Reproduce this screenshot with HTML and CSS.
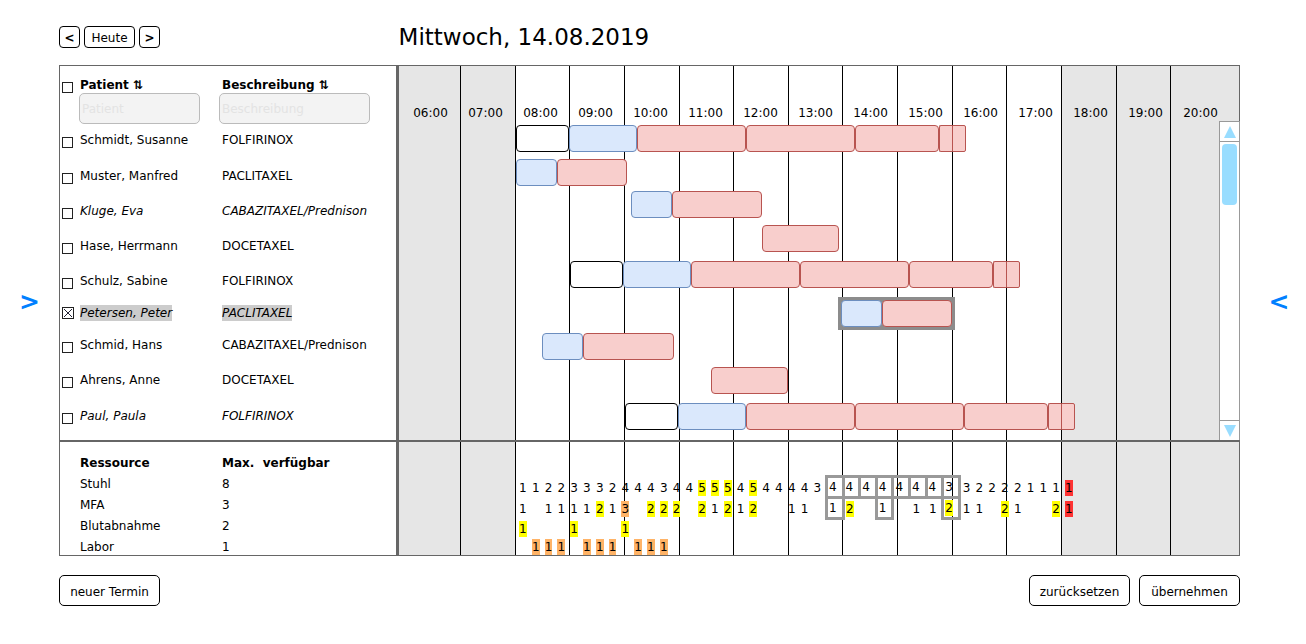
FILE: index.html
```html
<!DOCTYPE html>
<html lang="de">
<head>
<meta charset="utf-8">
<title>Terminplanung</title>
<meta name="viewport" content="width=device-width, initial-scale=1">
<link rel="stylesheet" href="styles.css">
</head>
<body>
<div class="page">
  <button class="handle" type="button" aria-label="Linke Leiste öffnen">&gt;</button>
  <main class="main">
    <header class="topbar">
      <nav class="day-nav">
        <button class="nav-btn nav-arrow" type="button" aria-label="Vorheriger Tag">&lt;</button>
        <button class="nav-btn" type="button">Heute</button>
        <button class="nav-btn nav-arrow" type="button" aria-label="Nächster Tag">&gt;</button>
      </nav>
      <h1 class="title">Mittwoch, 14.08.2019</h1>
    </header>

    <section class="calendar">
      <table class="patients">
        <thead>
          <tr>
            <th class="col-check"><input class="check" type="checkbox" aria-label="Alle auswählen"></th>
            <th class="col-name"><button class="sort" type="button">Patient ⇅</button><input class="filter" type="text" placeholder="Patient" aria-label="Patient filtern"></th>
            <th class="col-desc"><button class="sort" type="button">Beschreibung ⇅</button><input class="filter" type="text" placeholder="Beschreibung" aria-label="Beschreibung filtern"></th>
          </tr>
        </thead>
        <tbody>
          <tr class="row-tall"><td><input class="check" type="checkbox" id="p1"></td><td><label for="p1">Schmidt, Susanne</label></td><td>FOLFIRINOX</td></tr>
          <tr><td><input class="check" type="checkbox" id="p2"></td><td><label for="p2">Muster, Manfred</label></td><td>PACLITAXEL</td></tr>
          <tr class="tentative"><td><input class="check" type="checkbox" id="p3"></td><td><label for="p3">Kluge, Eva</label></td><td>CABAZITAXEL/Prednison</td></tr>
          <tr><td><input class="check" type="checkbox" id="p4"></td><td><label for="p4">Hase, Herrmann</label></td><td>DOCETAXEL</td></tr>
          <tr class="row-short"><td><input class="check" type="checkbox" id="p5"></td><td><label for="p5">Schulz, Sabine</label></td><td>FOLFIRINOX</td></tr>
          <tr class="row-short tentative selected"><td><input class="check" type="checkbox" id="p6" checked></td><td><label for="p6">Petersen, Peter</label></td><td><mark>PACLITAXEL</mark></td></tr>
          <tr><td><input class="check" type="checkbox" id="p7"></td><td><label for="p7">Schmid, Hans</label></td><td>CABAZITAXEL/Prednison</td></tr>
          <tr class="row-tall"><td><input class="check" type="checkbox" id="p8"></td><td><label for="p8">Ahrens, Anne</label></td><td>DOCETAXEL</td></tr>
          <tr class="row-last tentative"><td><input class="check" type="checkbox" id="p9"></td><td><label for="p9">Paul, Paula</label></td><td>FOLFIRINOX</td></tr>
        </tbody>
      </table>

      <div class="hours">
        <i class="off"></i><i class="off"></i><i></i><i></i><i></i><i></i><i></i><i></i><i></i><i></i><i></i><i></i><i class="off"></i><i class="off"></i><i class="off"></i>
      </div>
      <div class="split-v"></div>
      <div class="split-h"></div>

      <div class="schedule">
        <div class="hour-labels">
          <span>06:00</span><span>07:00</span><span>08:00</span><span>09:00</span><span>10:00</span><span>11:00</span><span>12:00</span><span>13:00</span><span>14:00</span><span>15:00</span><span>16:00</span><span>17:00</span><span>18:00</span><span>19:00</span><span>20:00</span>
        </div>
        <div class="track"><i style="--w:117"></i><b class="seg" style="--w:53"></b><b class="seg prep" style="--w:68"></b><b class="seg drug" style="--w:109"></b><b class="seg drug" style="--w:109"></b><b class="seg drug" style="--w:84"></b><b class="seg drug small" style="--w:13"></b><b class="seg drug small last" style="--w:14"></b></div>
        <div class="track track-short"><i style="--w:117"></i><b class="seg prep" style="--w:41"></b><b class="seg drug" style="--w:70"></b></div>
        <div class="track"><i style="--w:232"></i><b class="seg prep" style="--w:41"></b><b class="seg drug" style="--w:90"></b></div>
        <div class="track track-tall"><i style="--w:363"></i><b class="seg drug" style="--w:77"></b></div>
        <div class="track track-tall"><i style="--w:171"></i><b class="seg" style="--w:53"></b><b class="seg prep" style="--w:68"></b><b class="seg drug" style="--w:109"></b><b class="seg drug" style="--w:109"></b><b class="seg drug" style="--w:84"></b><b class="seg drug small" style="--w:13"></b><b class="seg drug small last" style="--w:14"></b></div>
        <div class="track track-tall"><i style="--w:439"></i><div class="picked" style="--w:117"><b class="seg prep" style="--w:41"></b><b class="seg drug" style="--w:70"></b></div></div>
        <div class="track"><i style="--w:143"></i><b class="seg prep" style="--w:41"></b><b class="seg drug" style="--w:91"></b></div>
        <div class="track track-tall"><i style="--w:312"></i><b class="seg drug" style="--w:77"></b></div>
        <div class="track"><i style="--w:226"></i><b class="seg" style="--w:53"></b><b class="seg prep" style="--w:68"></b><b class="seg drug" style="--w:109"></b><b class="seg drug" style="--w:109"></b><b class="seg drug" style="--w:84"></b><b class="seg drug small" style="--w:13"></b><b class="seg drug small last" style="--w:14"></b></div>
      </div>

      <div class="scrollbar">
        <button class="scroll-btn" type="button" aria-label="Nach oben"><svg viewBox="0 0 12 12" width="12" height="12"><path d="M6 0L12 12H0Z"/></svg></button>
        <div class="scroll-track"><div class="scroll-thumb"></div></div>
        <button class="scroll-btn" type="button" aria-label="Nach unten"><svg viewBox="0 0 12 12" width="12" height="12"><path d="M0 0H12L6 12Z"/></svg></button>
      </div>

      <table class="resources">
        <thead><tr><th class="col-res">Ressource</th><th>Max.&nbsp; verfügbar</th></tr></thead>
        <tbody>
          <tr><td>Stuhl</td><td>8</td></tr>
          <tr><td>MFA</td><td>3</td></tr>
          <tr><td>Blutabnahme</td><td>2</td></tr>
          <tr><td>Labor</td><td>1</td></tr>
        </tbody>
      </table>

      <div class="load">
        <div class="load-row row-chairs">
          <span style="--c:2">1</span><span style="--c:3">1</span><span style="--c:4">2</span><span style="--c:5">2</span><span style="--c:6">3</span><span style="--c:7">3</span><span style="--c:8">3</span><span style="--c:9">2</span><span style="--c:10">4</span><span style="--c:11">4</span><span style="--c:12">4</span><span style="--c:13">3</span><span style="--c:14">4</span><span style="--c:15">4</span><span style="--c:16"><mark class="mid">5</mark></span><span style="--c:17"><mark class="mid">5</mark></span><span style="--c:18"><mark class="mid">5</mark></span><span style="--c:19">4</span><span style="--c:20"><mark class="mid">5</mark></span><span style="--c:21">4</span><span style="--c:22">4</span><span style="--c:23">4</span><span style="--c:24">4</span><span style="--c:25">3</span>
          <span class="framed" style="--c:27">4</span><span class="framed" style="--c:28">4</span><span class="framed" style="--c:29">4</span><span class="framed" style="--c:30">4</span><span class="framed" style="--c:31">4</span><span class="framed" style="--c:32">4</span><span class="framed" style="--c:33">4</span><span class="framed" style="--c:34">3</span>
          <span style="--c:36">3</span><span style="--c:37">2</span><span style="--c:38">2</span><span style="--c:39">2</span><span style="--c:40">2</span><span style="--c:41">1</span><span style="--c:42">1</span><span style="--c:43">1</span><span style="--c:44"><mark class="over">1</mark></span>
        </div>
        <div class="load-row row-staff">
          <span style="--c:2">1</span><span style="--c:4">1</span><span style="--c:5">1</span><span style="--c:6">1</span><span style="--c:7">1</span><span style="--c:8"><mark class="mid">2</mark></span><span style="--c:9">1</span><span style="--c:10"><mark class="full">3</mark></span><span style="--c:12"><mark class="mid">2</mark></span><span style="--c:13"><mark class="mid">2</mark></span><span style="--c:14"><mark class="mid">2</mark></span><span style="--c:16"><mark class="mid">2</mark></span><span style="--c:17">1</span><span style="--c:18"><mark class="mid">2</mark></span><span style="--c:19">1</span><span style="--c:20"><mark class="mid">2</mark></span><span style="--c:23">1</span><span style="--c:24">1</span>
          <span class="framed" style="--c:27">1</span><span class="wide" style="--c:28"><mark class="mid">2</mark></span><span class="framed" style="--c:30">1</span><span class="wide" style="--c:32">1</span><span class="wide" style="--c:33">1</span><span class="framed" style="--c:34"><mark class="mid">2</mark></span>
          <span style="--c:36">1</span><span style="--c:37">1</span><span style="--c:39"><mark class="mid">2</mark></span><span style="--c:40">1</span><span style="--c:43"><mark class="mid">2</mark></span><span style="--c:44"><mark class="over">1</mark></span>
        </div>
        <div class="load-row row-blood">
          <span style="--c:2"><mark class="mid">1</mark></span><span style="--c:6"><mark class="mid">1</mark></span><span style="--c:10"><mark class="mid">1</mark></span>
        </div>
        <div class="load-row row-lab">
          <span style="--c:3"><mark class="full">1</mark></span><span style="--c:4"><mark class="full">1</mark></span><span style="--c:5"><mark class="full">1</mark></span><span style="--c:7"><mark class="full">1</mark></span><span style="--c:8"><mark class="full">1</mark></span><span style="--c:9"><mark class="full">1</mark></span><span style="--c:11"><mark class="full">1</mark></span><span style="--c:12"><mark class="full">1</mark></span><span style="--c:13"><mark class="full">1</mark></span>
        </div>
      </div>
    </section>

    <footer class="actions">
      <button class="action" type="button">neuer Termin</button>
      <div class="actions-end">
        <button class="action" type="button">zurücksetzen</button>
        <button class="action" type="button">übernehmen</button>
      </div>
    </footer>
  </main>
  <button class="handle" type="button" aria-label="Rechte Leiste öffnen">&lt;</button>
</div>
</body>
</html>
```

FILE: styles.css
```css
* { box-sizing: border-box; }

body {
  margin: 0;
  background: #fff;
  color: #000;
  font: 12px/16px "DejaVu Sans", Verdana, sans-serif;
}

button, input { font: inherit; color: inherit; }
button { padding: 0; background: none; border: 0; cursor: pointer; }
mark { background: #ccc; color: inherit; }

.page {
  display: grid;
  grid-template-columns: 59px minmax(0, 1fr) 66px;
  min-height: 100vh;
}

.handle {
  padding: 0 0 40px;
  color: #0080ff;
  font-size: 25px;
  font-weight: bold;
}
.handle:last-child { padding-left: 12px; }

.main { padding: 25px 0; }

/* Top bar */
.topbar {
  display: grid;
  grid-template-columns: 2fr 5fr;
  gap: 3px;
  align-items: center;
  height: 24px;
  margin-bottom: 16px;
}
.day-nav { display: flex; gap: 4px; }
.nav-btn {
  min-width: 51px;
  height: 22px;
  padding: 2px 6px 0;
  border: 1px solid #000;
  border-radius: 4px;
}
.nav-arrow { min-width: 21px; padding: 2px 0 0; font-weight: bold; }
.title { margin: 0; font-size: 23px; line-height: 24px; font-weight: normal; }

/* Calendar frame */
.calendar {
  display: grid;
  grid-template-columns: minmax(0, 2fr) 3px minmax(0, 5fr);
  grid-template-rows: auto 2px auto;
  border: 1px solid #666;
}
.split-v { grid-area: 1 / 2 / 4 / 3; background: #666; }
.split-h { grid-area: 2 / 1 / 3 / 4; background: #666; z-index: 1; }

/* Patient list */
.patients {
  grid-area: 1 / 1;
  align-self: start;
  width: 100%;
  table-layout: fixed;
  border-collapse: collapse;
}
.patients th, .patients td { padding: 0; text-align: left; vertical-align: top; }
.col-check { width: 19px; }
.col-name { width: 140px; }
.patients thead tr { height: 66px; }
.patients thead th { padding-top: 11px; }
.patients tbody tr { height: 35px; }
.patients tbody .row-tall { height: 36px; }
.patients tbody .row-short { height: 32px; }
.patients tbody .row-last { height: 20px; }
.patients td:nth-child(2) { padding-left: 1px; }
.patients td:nth-child(3) { padding-left: 3px; }
.tentative { font-style: italic; }
.selected label, .selected mark { display: inline-block; background: #ccc; }

.check {
  appearance: none;
  display: block;
  width: 11px;
  height: 11px;
  margin: 5px 0 0 2px;
  border: 1px solid #222;
  background: #fff;
}
.check:checked {
  width: 12px;
  height: 12px;
  margin-top: 2px;
  padding: 1px;
  background:
    linear-gradient(45deg, transparent 44%, #223 44% 56%, transparent 56%) content-box,
    linear-gradient(-45deg, transparent 44%, #223 44% 56%, transparent 56%) content-box;
}

.sort { display: block; margin-left: 1px; font-weight: bold; white-space: nowrap; }
.col-desc .sort { margin-left: 3px; }
.filter {
  display: block;
  width: 121px;
  height: 31px;
  padding: 3px 2px 2px;
  background: #f3f3f3;
  border: 1px solid #bbb;
  border-radius: 5px;
  font-weight: normal;
}
.col-desc .filter { width: 151px; }
.filter::placeholder { color: #e3e3e3; opacity: 1; }

/* Hour columns behind schedule and load */
.hours {
  grid-area: 1 / 3 / 4 / 4;
  display: grid;
  grid-template-columns: 62fr 55fr 54fr 55fr 55fr 54fr 55fr 54fr 55fr 55fr 54fr 55fr 55fr 54fr 68fr;
}
.hours i { border-right: 1px solid #000; }
.hours i:last-child { border-right: 0; }
.hours .off { background: #e6e6e6; }

/* Schedule */
.schedule {
  grid-area: 1 / 3;
  padding: 39px 0 10px;
}
.hour-labels {
  display: grid;
  grid-template-columns: repeat(15, 55fr);
  padding: 0 11px 0 4px;
  margin-bottom: 4px;
  text-align: center;
}
.track { display: flex; align-items: flex-start; height: 34px; }
.track-short { height: 32px; }
.track-tall { height: 36px; }
.track:last-child { height: 27px; }
.track > * { flex: none; width: calc(var(--w) / 840 * 100%); }
.seg {
  height: 27px;
  background: #fff;
  border: 1px solid #000;
  border-radius: 4px;
}
.prep { background: #dae8fc; border-color: #6c8ebf; }
.drug { background: #f8cecc; border-color: #b85450; }
.small { border-right: 0; border-radius: 2px 0 0 2px; }
.small.last { border-right: 1px solid #b85450; border-radius: 0 2px 2px 0; }
.picked {
  display: flex;
  padding: 3px;
  background: #8c8c8c;
}
.picked .seg { flex: none; width: calc(var(--w) / 111 * 100%); }

/* Scrollbar */
.scrollbar {
  grid-area: 1 / 3;
  justify-self: end;
  display: flex;
  flex-direction: column;
  width: 21px;
  margin: 55px -1px 0 0;
  background: #fff;
  border: 1px solid #999;
  border-bottom: 0;
}
.scroll-btn { display: grid; place-items: center; height: 19px; }
.scroll-btn svg { display: block; fill: #9df; }
.scroll-track {
  flex: 1;
  padding: 2px;
  border: solid #999;
  border-width: 1px 0;
}
.scroll-thumb { height: 61px; border-radius: 4px; background: #9df; }

/* Resources */
.resources {
  grid-area: 3 / 1;
  align-self: start;
  width: 100%;
  margin-top: 13px;
  table-layout: fixed;
  border-collapse: collapse;
}
.resources th, .resources td { padding: 0 0 5px; text-align: left; }
.resources tr :first-child { padding-left: 20px; }
.resources .col-res { width: 162px; }
.resources tbody tr:last-child td { padding-bottom: 0; }

.load { grid-area: 3 / 3; padding-top: 34px; }
.load-row {
  display: grid;
  grid-template-columns:
    1170fr repeat(24, minmax(0, 128fr)) 28fr
    repeat(8, minmax(0, 166fr)) 8fr
    repeat(9, minmax(0, 128fr)) 1642fr;
}
.row-chairs { height: 21px; }
.row-staff { height: 20px; }
.row-blood { height: 18px; }
.row-lab { height: 20px; }
.load-row span {
  grid-column: var(--c);
  grid-row: 1;
  padding: 4px 0 0 1px;
  text-align: center;
}
.load-row mark { display: inline-block; }
.load-row .wide { padding-right: 3px; }
.load-row .framed {
  height: 24px;
  margin: -1px -2px 0 -1px;
  padding: 1px 4px 0 0;
  border: 3px solid #999;
}
.load-row .mid { background: #ff0; }
.load-row .full { background: #ffb366; }
.load-row .over { background: #f33; }

/* Footer */
.actions { display: flex; justify-content: space-between; margin-top: 19px; }
.actions-end { display: flex; gap: 9px; }
.action {
  min-width: 101px;
  height: 31px;
  padding: 2px 8px 0;
  border: 1px solid #000;
  border-radius: 5px;
}
```
